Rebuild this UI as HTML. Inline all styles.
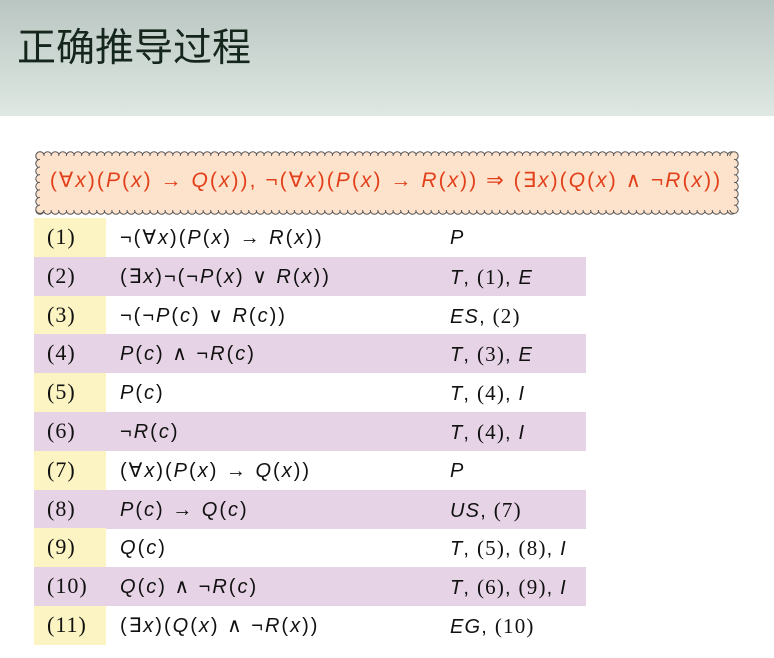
<!DOCTYPE html>
<html><head><meta charset="utf-8"><style>
body{margin:0;width:774px;height:658px;background:#fff;position:relative;overflow:hidden;font-family:"Liberation Sans","DejaVu Sans",sans-serif}
.hdr{position:absolute;left:0;top:0;width:774px;height:116px;background:linear-gradient(#bac6c2,#dfe8e3)}
.title{position:absolute;left:17px;top:22px;font:39px "Noto Sans CJK SC",sans-serif;color:#15261c;line-height:46px}
.red{position:absolute;left:36px;top:166px;width:700px;text-align:center;color:#e2401a;font-size:21px;letter-spacing:2.05px;line-height:30px;white-space:nowrap}
.row{position:absolute;left:34px;width:552px;height:39px;font-size:20px;line-height:40px;color:#111}
.row.p{background:#e6d3e5}
.num{position:absolute;left:0;top:0;width:72px;height:39px;background:#fcf4c2;font-family:"Liberation Serif",serif;font-size:22px;letter-spacing:1px;padding-left:13px;box-sizing:border-box;line-height:38px}
.row.p .num{background:#e6d3e5}
.f{position:absolute;left:86px;letter-spacing:2px}
.r{position:absolute;left:416px;letter-spacing:1.2px}
i{font-style:italic}
.serif{font-family:"Liberation Serif",serif;font-size:21px}
</style></head><body>
<div class="hdr"></div>
<div class="title">正确推导过程</div>
<svg id="cl" width="774" height="658" style="position:absolute;left:0;top:0"></svg>
<div class="red">(∀<i>x</i>)(<i>P</i>(<i>x</i>) → <i>Q</i>(<i>x</i>)), ¬(∀<i>x</i>)(<i>P</i>(<i>x</i>) → <i>R</i>(<i>x</i>)) ⇒ (∃<i>x</i>)(<i>Q</i>(<i>x</i>) ∧ ¬<i>R</i>(<i>x</i>))</div>

<div class="row" style="top:218px"><div class="num">(1)</div><div class="f">¬(∀<i>x</i>)(<i>P</i>(<i>x</i>) → <i>R</i>(<i>x</i>))</div><div class="r"><i>P</i></div></div>
<div class="row p" style="top:257px"><div class="num">(2)</div><div class="f">(∃<i>x</i>)¬(¬<i>P</i>(<i>x</i>) ∨ <i>R</i>(<i>x</i>))</div><div class="r"><i>T</i>, <span class="serif">(1)</span>, <i>E</i></div></div>
<div class="row" style="top:296px"><div class="num">(3)</div><div class="f">¬(¬<i>P</i>(<i>c</i>) ∨ <i>R</i>(<i>c</i>))</div><div class="r"><i>ES</i>, <span class="serif">(2)</span></div></div>
<div class="row p" style="top:334px"><div class="num">(4)</div><div class="f"><i>P</i>(<i>c</i>) ∧ ¬<i>R</i>(<i>c</i>)</div><div class="r"><i>T</i>, <span class="serif">(3)</span>, <i>E</i></div></div>
<div class="row" style="top:373px"><div class="num">(5)</div><div class="f"><i>P</i>(<i>c</i>)</div><div class="r"><i>T</i>, <span class="serif">(4)</span>, <i>I</i></div></div>
<div class="row p" style="top:412px"><div class="num">(6)</div><div class="f">¬<i>R</i>(<i>c</i>)</div><div class="r"><i>T</i>, <span class="serif">(4)</span>, <i>I</i></div></div>
<div class="row" style="top:451px"><div class="num">(7)</div><div class="f">(∀<i>x</i>)(<i>P</i>(<i>x</i>) → <i>Q</i>(<i>x</i>))</div><div class="r"><i>P</i></div></div>
<div class="row p" style="top:490px"><div class="num">(8)</div><div class="f"><i>P</i>(<i>c</i>) → <i>Q</i>(<i>c</i>)</div><div class="r"><i>US</i>, <span class="serif">(7)</span></div></div>
<div class="row" style="top:528px"><div class="num">(9)</div><div class="f"><i>Q</i>(<i>c</i>)</div><div class="r"><i>T</i>, <span class="serif">(5)</span>, <span class="serif">(8)</span>, <i>I</i></div></div>
<div class="row p" style="top:567px"><div class="num">(10)</div><div class="f"><i>Q</i>(<i>c</i>) ∧ ¬<i>R</i>(<i>c</i>)</div><div class="r"><i>T</i>, <span class="serif">(6)</span>, <span class="serif">(9)</span>, <i>I</i></div></div>
<div class="row" style="top:606px"><div class="num">(11)</div><div class="f">(∃<i>x</i>)(<i>Q</i>(<i>x</i>) ∧ ¬<i>R</i>(<i>x</i>))</div><div class="r"><i>EG</i>, <span class="serif">(10)</span></div></div>
<script>
(function(){
var s=document.getElementById('cl'),L=40,R=734,T=156,B=210,r=4.2,st=7.6,h='';
function c(x,y){h+='<circle cx="'+x.toFixed(1)+'" cy="'+y.toFixed(1)+'" r="'+r+'" fill="#fde2cc" stroke="#555" stroke-width="1"/>';}
for(var x=L;x<=R;x+=st){c(x,T);c(x,B);}
for(var y=T;y<=B;y+=st){c(L,y);c(R,y);}
h+='<rect x="'+L+'" y="'+T+'" width="'+(R-L)+'" height="'+(B-T)+'" fill="#fde2cc"/>';
s.innerHTML=h;
})();
</script>
</body></html>
